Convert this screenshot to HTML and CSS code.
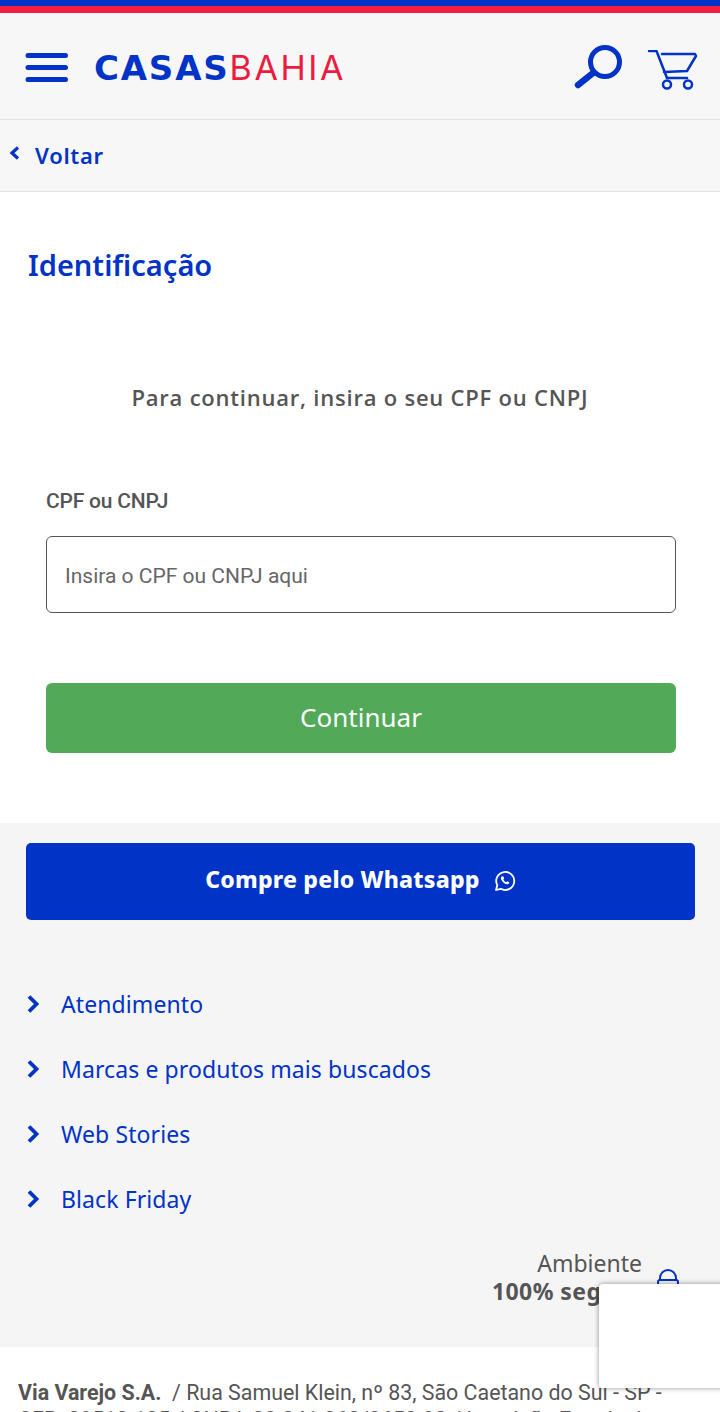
FILE: index.html
```html
<!DOCTYPE html>
<html lang="pt-BR">
<head>
<meta charset="utf-8">
<title>Identificação</title>
<link rel="stylesheet" href="styles.css">
</head>
<body>
<div class="stripe"></div>
<header class="top">
  <svg class="menu" width="44" height="32" viewBox="0 0 44 32"><g stroke="#0033c6" stroke-width="5" stroke-linecap="round"><path d="M3 3.500h37.500M3 15.500h37.500M3 27.500h37.500"/></g></svg>
  <div class="logo"><span class="casas">CASAS</span><span class="bahia">BAHIA</span></div>
  <div class="top-icons">
    <svg class="search" width="50" height="46" viewBox="0 0 50 46" fill="none" stroke="#0033c6"><circle cx="31" cy="19" r="14.500" stroke-width="5"/><path d="M19 30L4 42" stroke-width="6.500" stroke-linecap="round"/></svg>
    <svg class="cart" width="50" height="40" viewBox="0 0 50 40" fill="none" stroke="#0033c6" stroke-width="2.500" stroke-linecap="round" stroke-linejoin="round"><path d="M1 1h7.500l10.500 27h20"/><path d="M14 4h33l1 2-9 15-23 1"/><circle cx="19" cy="34.500" r="4"/><circle cx="40" cy="34.500" r="4"/></svg>
  </div>
</header>
<nav class="back">
  <svg width="12" height="14" viewBox="0 0 12 14" fill="none"><path d="M9 1.500L3 7l6 5.500" stroke="#0033c6" stroke-width="3.200"/></svg>
  <a class="back-link">Voltar</a>
</nav>
<main class="main">
  <h1 class="title">Identificação</h1>
  <p class="lead">Para continuar, insira o seu CPF ou CNPJ</p>
  <form class="form">
    <label class="label" for="doc">CPF ou CNPJ</label>
    <input class="input" id="doc" placeholder="Insira o CPF ou CNPJ aqui">
    <button class="submit" type="button">Continuar</button>
  </form>
</main>
<section class="footer">
  <a class="whats">Compre pelo Whatsapp
    <svg width="22" height="22" viewBox="0 0 22 22" fill="none" stroke="#fff" stroke-width="1.800"><path d="M2 20l1.300-4.800A9 9 0 1 1 6.800 18.800z" stroke-linejoin="round"/><path d="M7.500 6.500c-1 1-.8 2.800.8 4.800s3.800 3.300 5.200 3 2-1.500 1.800-2l-2.200-1-1 1c-1-.4-2.300-1.700-2.800-2.800l.9-1-1-2.200z" fill="#fff" stroke="none"/></svg>
  </a>
  <ul class="links">
    <li class="link"><svg width="14" height="18" viewBox="0 0 14 18" fill="none"><path d="M3 1.500L10.500 9L3 16.500" stroke="#0033c6" stroke-width="3.800"/></svg>Atendimento</li>
    <li class="link"><svg width="14" height="18" viewBox="0 0 14 18" fill="none"><path d="M3 1.500L10.500 9L3 16.500" stroke="#0033c6" stroke-width="3.800"/></svg>Marcas e produtos mais buscados</li>
    <li class="link"><svg width="14" height="18" viewBox="0 0 14 18" fill="none"><path d="M3 1.500L10.500 9L3 16.500" stroke="#0033c6" stroke-width="3.800"/></svg>Web Stories</li>
    <li class="link"><svg width="14" height="18" viewBox="0 0 14 18" fill="none"><path d="M3 1.500L10.500 9L3 16.500" stroke="#0033c6" stroke-width="3.800"/></svg>Black Friday</li>
  </ul>
  <div class="safe">
    <div class="safe-text">Ambiente<br><b class="safe-strong">100% seguro</b></div>
    <svg class="lock" width="24" height="30" viewBox="0 0 24 30" fill="none" stroke="#0033c6" stroke-width="2"><path d="M4 12V10a8 8 0 0 1 16 0v2"/><rect x="2" y="12" width="20" height="16" rx="2"/></svg>
  </div>
</section>
<footer class="legal"><b>Via Varejo S.A.</b>&nbsp; / Rua Samuel Klein, nº 83, São Caetano do Sul - SP - CEP: 09510-125 / CNPJ: 33.041.260/0652-90 / Inscrição Estadual: 636.137.150.116</footer>
<div class="badge"></div>
</body>
</html>
```
FILE: styles.css
```css
* { box-sizing: border-box; }
html, body { margin: 0; padding: 0; }
body { height: 1412px; overflow: hidden; background: #fff; font-family: "Open Sans", "Liberation Sans", sans-serif; position: relative; }
.stripe { height: 13px; background: linear-gradient(#0033c6 0 6px, #f31d41 6px); }
.top { height: 107px; background: #f7f7f7; border-bottom: 1px solid #e2e2e2; display: flex; align-items: center; padding: 0 22px 0 25px; }
.menu { margin-top: 4px; }
.logo { margin-left: 25px; margin-top: 2px; font-size: 34px; line-height: 40px; white-space: nowrap; }
.casas { color: #0033c6; font-weight: 700; font-family: "DejaVu Sans", sans-serif; letter-spacing: 1.8px; }
.bahia { color: #ec1c40; font-weight: 400; font-family: Inter, sans-serif; letter-spacing: 2.6px; }
.top-icons { margin-left: auto; display: flex; gap: 24px; align-items: center; }
.cart { margin-top: 7px; }
.back { height: 72px; background: #f7f7f7; border-bottom: 1px solid #e2e2e2; display: flex; align-items: center; padding: 0 0 2px 9px; gap: 14px; }
.back svg { margin-top: -3px; }
.back-link { color: #0033c6; font-size: 22px; font-weight: 600; font-family: "Noto Sans", sans-serif; letter-spacing: .7px; }
.main { height: 631px; padding: 51px 44px 0 46px; display: flex; flex-direction: column; }
.title { margin: 0 0 0 -18px; color: #0033c6; font-size: 29px; line-height: 44px; font-weight: 600; font-family: "Noto Sans", sans-serif; }
.lead { margin: 95px 0 0; text-align: center; color: #555; font-size: 22px; line-height: 30px; font-weight: 600; padding-right: 2px; letter-spacing: .78px; }
.form { display: flex; flex-direction: column; margin-top: 74px; }
.label { color: #555; font-family: Roboto, sans-serif; font-size: 21px; font-weight: 500; line-height: 30px; letter-spacing: -.2px; }
.input { margin-top: 20px; height: 77px; border: 1px solid #555; border-radius: 6px; padding: 2px 18px 0; font-family: Roboto, sans-serif; font-size: 21px; background: #fff; outline: none; }
.input::placeholder { color: #666; opacity: 1; }
.submit { margin-top: 70px; height: 70px; border: 0; border-radius: 6px; padding: 0 0 2px; background: #52a957; color: #fff; font-size: 26px; font-family: "Noto Sans", sans-serif; }
.footer { height: 524px; background: #f5f5f5; padding: 20px 25px 0 26px; }
.whats { height: 77px; background: #0033c6; border-radius: 5px; color: #fff; font-size: 23px; font-weight: 800; display: flex; align-items: center; justify-content: center; gap: 14px; padding-bottom: 5px; font-family: "Noto Sans", sans-serif; letter-spacing: .2px; }
.whats svg { margin-top: 4px; }
.links { list-style: none; margin: 51px 0 0; padding: 0; }
.link { height: 65px; display: flex; align-items: center; gap: 21px; color: #0033c6; font-size: 23px; letter-spacing: .1px; font-family: "Noto Sans", sans-serif; }
.safe { margin-top: 18px; display: flex; justify-content: flex-end; align-items: flex-end; gap: 14px; padding-right: 15px; }
.safe-text { color: #555; font-size: 23px; line-height: 28px; text-align: right; font-family: "Noto Sans", sans-serif; }
.safe-strong { letter-spacing: .45px; }
.lock { margin-bottom: 7px; }
.legal { background: #fff; padding: 32px 40px 0 18px; color: #555; font-size: 21.400px; line-height: 27px; font-family: Roboto, sans-serif; }
.badge { position: absolute; left: 599px; top: 1284px; width: 130px; height: 104px; background: #fff; border-radius: 4px; box-shadow: 0 0 5px rgba(0,0,0,.45); }
```
